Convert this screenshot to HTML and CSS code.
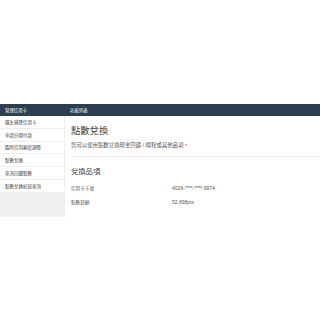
FILE: index.html
```html
<!DOCTYPE html>
<html lang="zh-Hant">
<head>
<meta charset="utf-8">
<title>點數兌換</title>
<link rel="stylesheet" href="styles.css">
</head>
<body>
<div class="app">
  <div class="topbar">
    <div class="topbar-side">管理信用卡</div>
    <div class="topbar-main">功能列表</div>
  </div>
  <div class="body">
    <nav class="side">
      <ul class="menu">
        <li>遺失補發信用卡</li>
        <li>申請分期付款</li>
        <li>臨時信用額度調整</li>
        <li class="active">點數兌換</li>
        <li>查詢回饋點數</li>
        <li>點數兌換紀錄查詢</li>
      </ul>
      <div class="filler"></div>
    </nav>
    <main class="main">
      <h1 class="title">點數兌換</h1>
      <p class="desc">您可以使用點數兌換現金回饋 / 哩程或其他品項。</p>
      <h2 class="subtitle">兌換品項</h2>
      <div class="rows">
        <div class="row"><span class="label">信用卡卡號</span><span class="value">4029-****-****-9974</span></div>
        <div class="row"><span class="label">點數餘額</span><span class="value">52,898pts</span></div>
      </div>
    </main>
  </div>
</div>
</body>
</html>
```
FILE: styles.css
```css
html, body {
  margin: 0;
  padding: 0;
  background: #fff;
}
body {
  font-family: "Liberation Sans", "Noto Sans CJK TC", sans-serif;
  color: #444;
}
.app {
  margin-top: 104px;
}
.topbar {
  display: flex;
  height: 12px;
  align-items: center;
  background: #2c3e50;
  color: #fff;
  font-size: 4.4px;
}
.topbar-side {
  width: 65px;
  padding-left: 5px;
  box-sizing: border-box;
}
.topbar-main {
  padding-left: 5px;
}
.body {
  display: flex;
  height: 101px;
}
.side {
  width: 65px;
  display: flex;
  flex-direction: column;
}
.menu {
  list-style: none;
  margin: 0;
  padding: 0;
}
.menu li {
  height: 12.8px;
  box-sizing: border-box;
  display: flex;
  align-items: center;
  padding-left: 5px;
  font-size: 4.5px;
  color: #444;
  border-bottom: 0.5px solid #eee;
  border-right: 0.5px solid #eee;
  background: #fff;
}
.filler {
  flex: 1;
  background: #efefef;
}
.main {
  flex: 1;
  padding-left: 6px;
  padding-top: 9px;
}
.title {
  margin: 0;
  font-size: 9.3px;
  font-weight: normal;
  line-height: 12px;
  color: #444;
}
.desc {
  margin: 0;
  padding: 4px 0 7px;
  font-size: 5.4px;
  line-height: 8px;
  color: #555;
  border-bottom: 0.5px solid #eee;
}
.subtitle {
  margin: 0;
  padding-top: 10px;
  font-size: 7.3px;
  font-weight: normal;
  line-height: 10px;
  color: #444;
}
.rows {
  padding-top: 4px;
}
.row {
  display: flex;
  height: 14px;
  align-items: center;
  font-size: 4.6px;
  color: #555;
}
.label {
  width: 101px;
}
.value {
  font-size: 5px;
}
```
